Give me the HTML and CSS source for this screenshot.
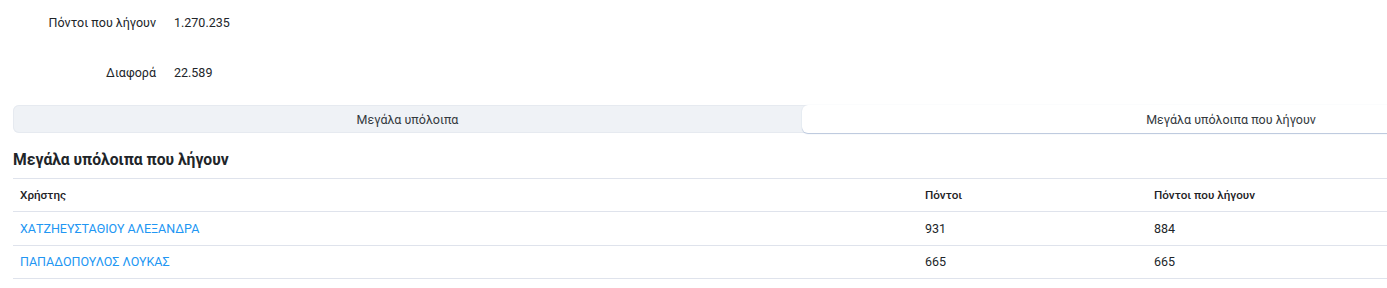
FILE: index.html
```html
<!DOCTYPE html>
<html lang="el">
<head>
<meta charset="utf-8">
<link rel="stylesheet" href="styles.css">
</head>
<body>
<div class="page">
  <div class="content">
    <div class="summary">
      <div class="summary-row"><span class="label">Πόντοι που λήγουν</span><span class="value">1.270.235</span></div>
      <div class="summary-row"><span class="label">Διαφορά</span><span class="value">22.589</span></div>
    </div>
    <div class="tabs">
      <div class="tab">Μεγάλα υπόλοιπα</div>
      <div class="tab active">Μεγάλα υπόλοιπα που λήγουν</div>
    </div>
    <h2 class="title">Μεγάλα υπόλοιπα που λήγουν</h2>
    <table class="grid">
      <colgroup><col class="c1"><col class="c2"><col class="c3"></colgroup>
      <thead>
        <tr><th>Χρήστης</th><th>Πόντοι</th><th>Πόντοι που λήγουν</th></tr>
      </thead>
      <tbody>
        <tr><td><a href="#">ΧΑΤΖΗΕΥΣΤΑΘΙΟΥ ΑΛΕΞΑΝΔΡΑ</a></td><td>931</td><td>884</td></tr>
        <tr><td><a href="#">ΠΑΠΑΔΟΠΟΥΛΟΣ ΛΟΥΚΑΣ</a></td><td>665</td><td>665</td></tr>
      </tbody>
    </table>
  </div>
</div>
</body>
</html>
```
FILE: styles.css
```css
html, body {
  margin: 0;
  padding: 0;
  background: #fff;
}
body {
  font-family: Roboto, "Noto Sans", sans-serif;
  font-size: 12.5px;
  color: #212529;
}
.page {
  width: 100%;
  overflow: hidden;
}
.content {
  width: 1647px;
  padding-left: 13px;
}
.summary {
  display: flex;
  flex-direction: column;
  gap: 6px;
}
.summary-row {
  height: 44px;
  display: flex;
  align-items: center;
  gap: 18px;
}
.label {
  width: 143px;
  text-align: right;
}
.tabs {
  margin-top: 11px;
  display: grid;
  grid-template-columns: 789px 858px;
  height: 28px;
  background: #eff2f6;
  border-radius: 6px;
  box-shadow: inset 0 0 0 1px #e6eaf0;
}
.tab {
  display: flex;
  align-items: center;
  justify-content: center;
  color: #343a40;
}
.tab.active {
  background: #fff;
  border-radius: 6px;
  box-shadow: 0 1px 1px #b9c6dc, 0 0 1px #d5dce6;
}
.title {
  margin: 17px 0 8px;
  font-size: 15.7px;
  line-height: 20px;
  font-weight: 700;
  color: #212529;
}
.grid {
  width: 1647px;
  border-collapse: collapse;
  table-layout: fixed;
}
.c1 { width: 905px; }
.c2 { width: 229px; }
.grid th, .grid td {
  text-align: left;
  padding: 0 7px;
  height: 32.4px;
  border-top: 1px solid #dfe3ec;
  border-bottom: 1px solid #dfe3ec;
  vertical-align: middle;
}
.grid th {
  font-weight: 500;
  font-size: 11.7px;
  color: #1d2125;
}
.grid a {
  color: #2196f3;
  text-decoration: none;
}
```
